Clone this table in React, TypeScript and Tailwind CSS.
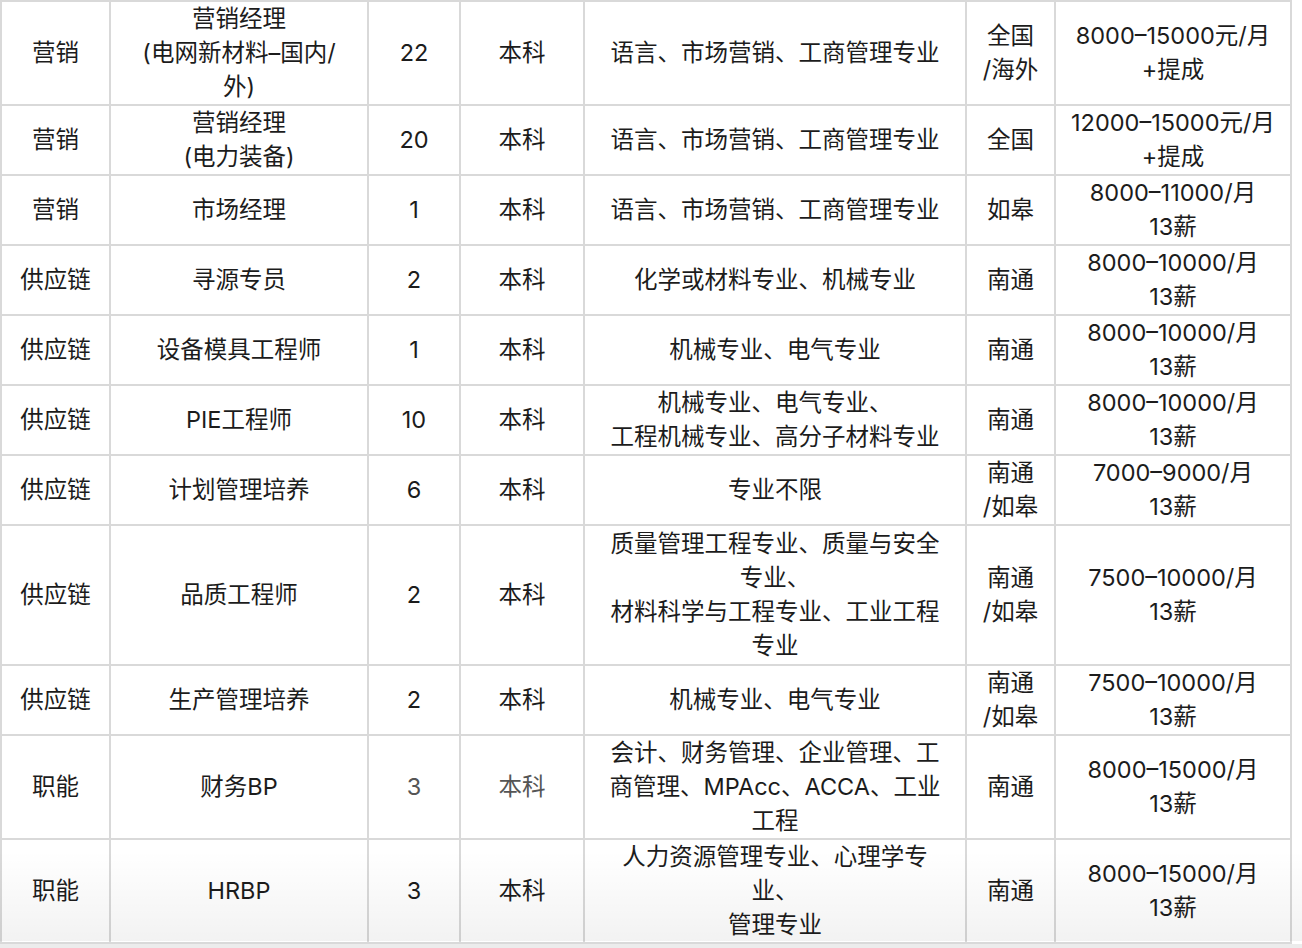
type Row = {
  dept: string;
  title: string[];
  count: string;
  degree: string;
  major: string[];
  place: string[];
  pay: string[];
  h: string;
  muted?: boolean;
};

const rows: Row[] = [
  { dept: "营销", title: ["营销经理", "(电网新材料–国内/", "外)"], count: "22", degree: "本科", major: ["语言、市场营销、工商管理专业"], place: ["全国", "/海外"], pay: ["8000–15000元/月", "+提成"], h: "h-[104px]" },
  { dept: "营销", title: ["营销经理", "(电力装备)"], count: "20", degree: "本科", major: ["语言、市场营销、工商管理专业"], place: ["全国"], pay: ["12000–15000元/月", "+提成"], h: "h-[70px]" },
  { dept: "营销", title: ["市场经理"], count: "1", degree: "本科", major: ["语言、市场营销、工商管理专业"], place: ["如皋"], pay: ["8000–11000/月", "13薪"], h: "h-[70px]" },
  { dept: "供应链", title: ["寻源专员"], count: "2", degree: "本科", major: ["化学或材料专业、机械专业"], place: ["南通"], pay: ["8000–10000/月", "13薪"], h: "h-[70px]" },
  { dept: "供应链", title: ["设备模具工程师"], count: "1", degree: "本科", major: ["机械专业、电气专业"], place: ["南通"], pay: ["8000–10000/月", "13薪"], h: "h-[70px]" },
  { dept: "供应链", title: ["PIE工程师"], count: "10", degree: "本科", major: ["机械专业、电气专业、", "工程机械专业、高分子材料专业"], place: ["南通"], pay: ["8000–10000/月", "13薪"], h: "h-[70px]" },
  { dept: "供应链", title: ["计划管理培养"], count: "6", degree: "本科", major: ["专业不限"], place: ["南通", "/如皋"], pay: ["7000–9000/月", "13薪"], h: "h-[70px]" },
  { dept: "供应链", title: ["品质工程师"], count: "2", degree: "本科", major: ["质量管理工程专业、质量与安全", "专业、", "材料科学与工程专业、工业工程", "专业"], place: ["南通", "/如皋"], pay: ["7500–10000/月", "13薪"], h: "h-[140px]" },
  { dept: "供应链", title: ["生产管理培养"], count: "2", degree: "本科", major: ["机械专业、电气专业"], place: ["南通", "/如皋"], pay: ["7500–10000/月", "13薪"], h: "h-[70px]" },
  { dept: "职能", title: ["财务BP"], count: "3", degree: "本科", major: ["会计、财务管理、企业管理、工", "商管理、MPAcc、ACCA、工业", "工程"], place: ["南通"], pay: ["8000–15000/月", "13薪"], h: "h-[104px]", muted: true },
  { dept: "职能", title: ["HRBP"], count: "3", degree: "本科", major: ["人力资源管理专业、心理学专", "业、", "管理专业"], place: ["南通"], pay: ["8000–15000/月", "13薪"], h: "h-[102px]" },
];

function Lines({ items }: { items: string[] }) {
  return (
    <>
      {items.map((t, i) => (
        <div key={i} className="whitespace-nowrap">
          {t}
        </div>
      ))}
    </>
  );
}

const cell = "border-2 border-[#d9d9d9] p-0 text-center align-middle";

export default function App() {
  return (
    <div
      className="relative min-h-[948px] w-[1302px] bg-white text-[23.5px] leading-[34px] text-[#1c1c1c]"
      style={{ fontFamily: 'Inter, "Noto Sans CJK SC", sans-serif' }}
    >
      <table className="w-[1290px] table-fixed border-collapse">
        <colgroup>
          <col className="w-[109px]" />
          <col className="w-[258px]" />
          <col className="w-[92px]" />
          <col className="w-[124px]" />
          <col className="w-[382px]" />
          <col className="w-[89px]" />
          <col className="w-[236px]" />
        </colgroup>
        <tbody>
          {rows.map((r, i) => (
            <tr key={i} className={r.h}>
              <td className={cell}>{r.dept}</td>
              <td className={cell}>
                <Lines items={r.title} />
              </td>
              <td className={`${cell} ${r.muted ? "text-[#555]" : ""}`}>{r.count}</td>
              <td className={`${cell} ${r.muted ? "text-[#555]" : ""}`}>{r.degree}</td>
              <td className={cell}>
                <Lines items={r.major} />
              </td>
              <td className={cell}>
                <Lines items={r.place} />
              </td>
              <td className={cell}>
                <Lines items={r.pay} />
              </td>
            </tr>
          ))}
        </tbody>
      </table>
      <div className="h-[8px] bg-[#ececec]" />
      {/* soft fade at the bottom edge */}
      <div className="pointer-events-none absolute inset-x-0 top-[850px] h-[91px] bg-gradient-to-b from-transparent to-[#000]/[0.05]" />
    </div>
  );
}
